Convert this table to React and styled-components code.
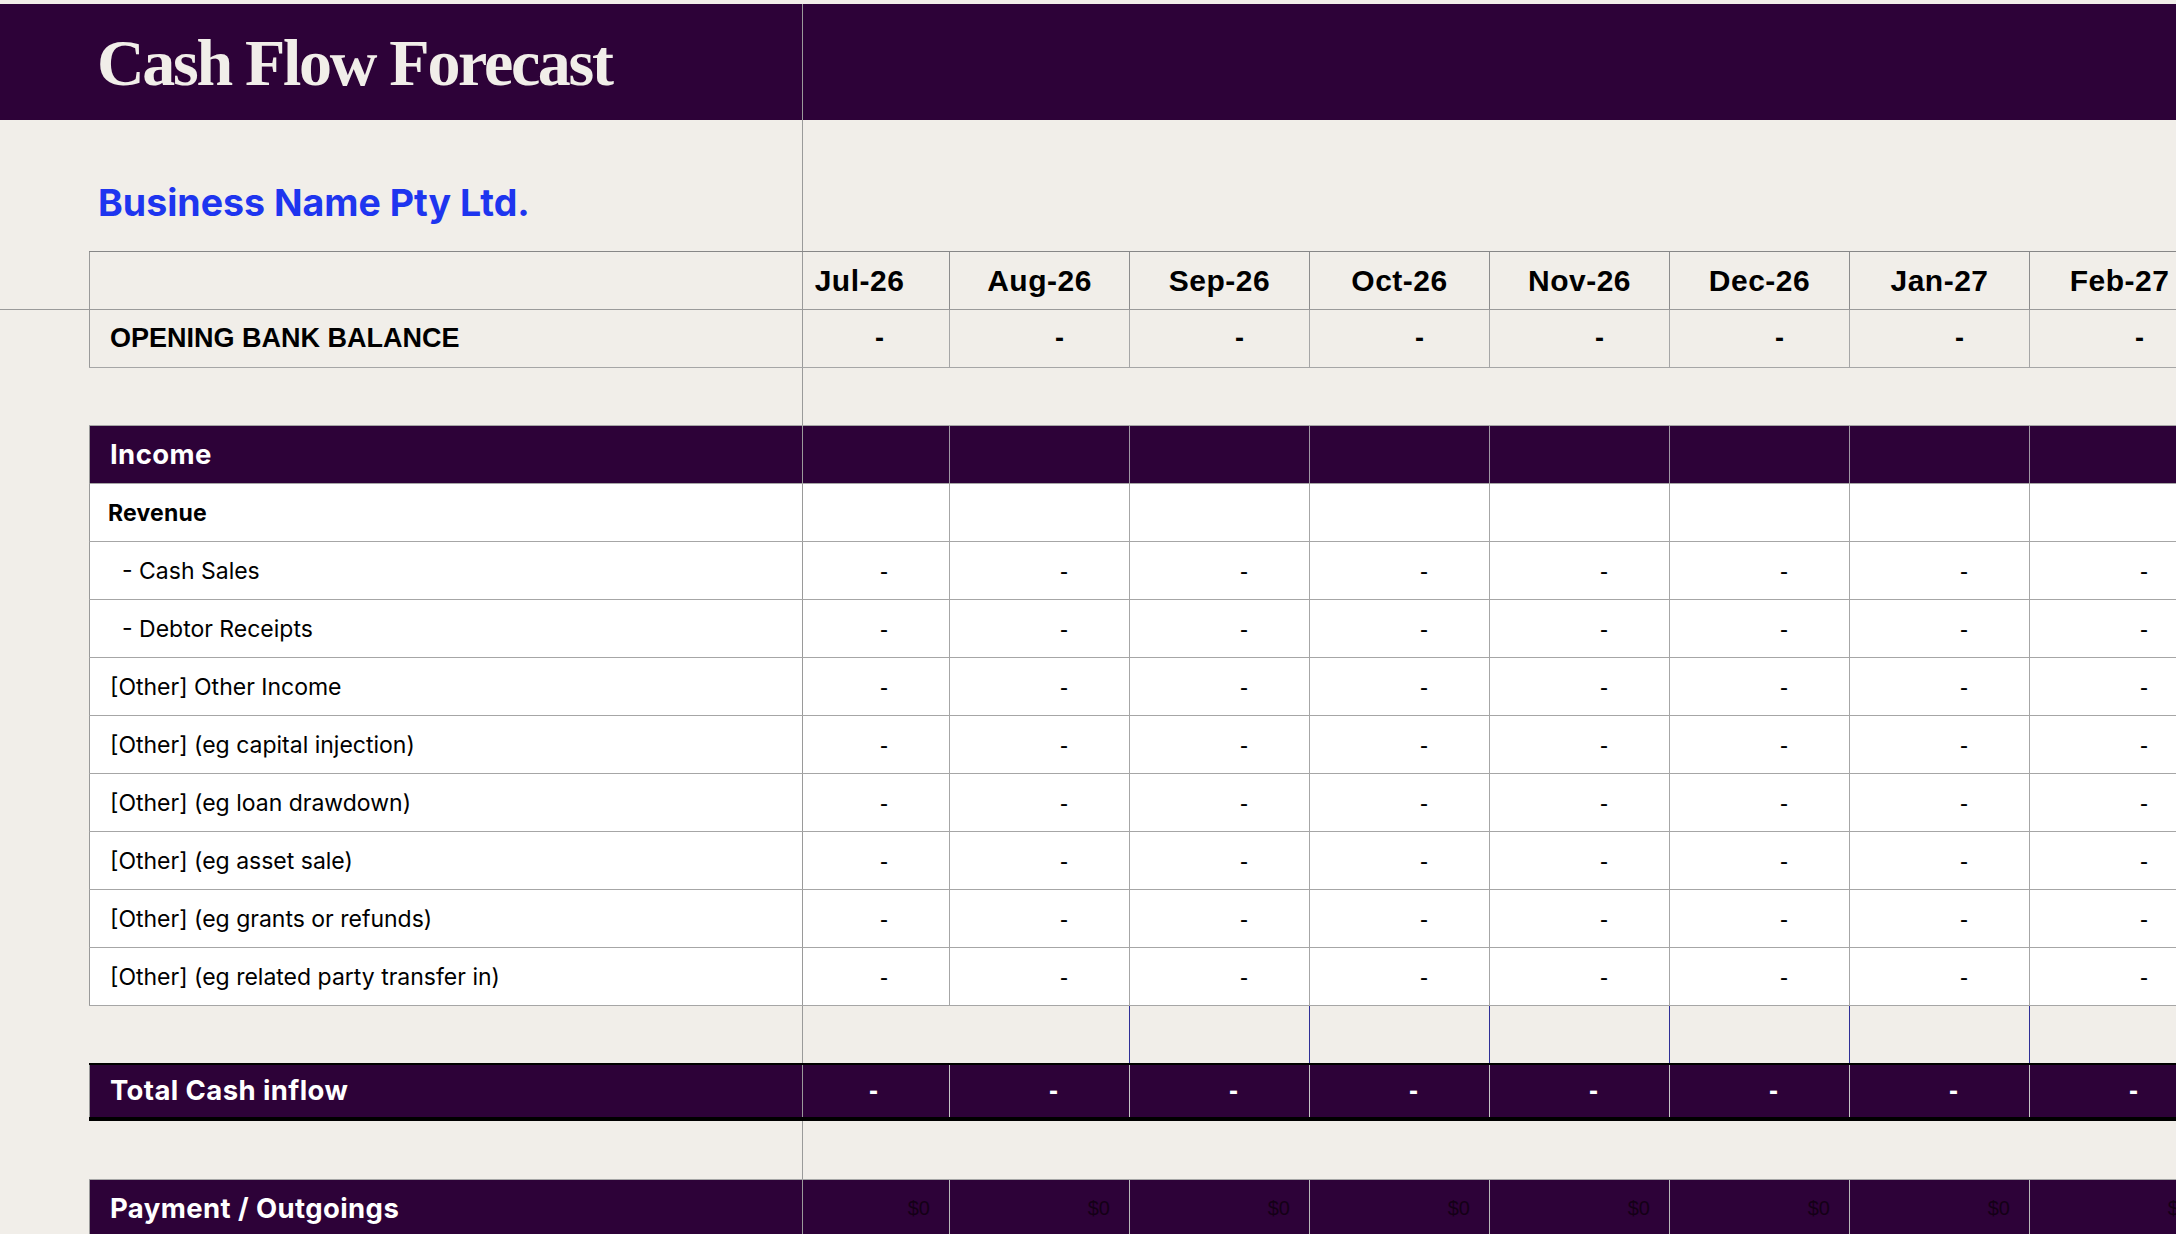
import React from 'react';
import styled, { createGlobalStyle, css } from 'styled-components';

const PURPLE = '#2d0238';
const PAPER = '#f1eee9';
const GRID = '#a6a6a6';
const FREEZE = '#9a9a9a';

const MONTHS = ['Jul-26', 'Aug-26', 'Sep-26', 'Oct-26', 'Nov-26', 'Dec-26', 'Jan-27', 'Feb-27'];

const INCOME_LINES = [
    { label: 'Revenue', kind: 'sub', empty: true },
    { label: '- Cash Sales', kind: 'item', indent: 32 },
    { label: '- Debtor Receipts', kind: 'item', indent: 32 },
    { label: '[Other] Other Income', kind: 'item' },
    { label: '[Other] (eg capital injection)', kind: 'item' },
    { label: '[Other] (eg loan drawdown)', kind: 'item' },
    { label: '[Other] (eg asset sale)', kind: 'item' },
    { label: '[Other] (eg grants or refunds)', kind: 'item' },
    { label: '[Other] (eg related party transfer in)', kind: 'item' },
];

const GlobalStyle = createGlobalStyle`
    * { box-sizing: border-box; }
    html, body {
        margin: 0;
        padding: 0;
        background: ${PAPER};
        overflow: hidden;
    }
    body {
        font-family: Inter, "Liberation Sans", sans-serif;
        color: #000;
    }
`;

const Page = styled.div`
    width: 2176px;
    height: 1234px;
    padding-top: 4px;
    overflow: hidden;
    background: ${PAPER};
`;

const Banner = styled.header`
    display: grid;
    grid-template-columns: 802px 1fr;
    height: 116px;
    background: ${PURPLE};
`;

const TitleCell = styled.div`
    padding: 26px 0 0 97px;
`;

const Title = styled.h1`
    margin: 0;
    font-family: "Liberation Serif", "DejaVu Serif", serif;
    font-weight: 700;
    font-size: 66px;
    line-height: 66px;
    letter-spacing: -2.3px;
    color: ${PAPER};
    white-space: nowrap;
`;

const PaneRest = styled.div`
    border-left: 1px solid ${FREEZE};
`;

const NameBand = styled.div`
    display: grid;
    grid-template-columns: 802px 1fr;
    height: 131px;
`;

const NameCell = styled.div`
    padding: 64px 0 0 98px;
`;

const BusinessName = styled.h2`
    margin: 0;
    font-family: Inter, sans-serif;
    font-weight: 700;
    font-size: 37.5px;
    line-height: 37px;
    color: #1e35ef;
    white-space: nowrap;
`;

const Row = styled.div`
    display: grid;
    grid-template-columns: 89px 1fr;
    height: 58px;
`;

const Gutter = styled.div`
    border-top: ${p => (p.$freeze ? `1px solid ${FREEZE}` : 'none')};
`;

const Band = styled.div`
    display: grid;
    grid-template-columns: 713px 1fr;
    min-width: 0;
    background: ${p => p.$bg || 'transparent'};
    border-top: ${p => p.$top || 'none'};
    border-bottom: ${p => p.$bottom || 'none'};
`;

const labelStyles = {
    blank: css``,
    caps: css`
        font-family: "Liberation Sans", Arial, sans-serif;
        font-weight: 700;
        font-size: 27px;
    `,
    heading: css`
        font-weight: 700;
        font-size: 27.5px;
        letter-spacing: 0.4px;
        color: #fff;
        padding-bottom: 2px;
    `,
    sub: css`
        font-weight: 700;
        font-size: 23px;
        letter-spacing: 0.2px;
        padding-left: 18px;
    `,
    item: css`
        font-weight: 400;
        font-size: 23px;
    `,
};

const Label = styled.div`
    display: flex;
    align-items: center;
    padding-left: ${p => p.$indent || 20}px;
    border-left: 1px solid ${p => (p.$boxed ? FREEZE : 'transparent')};
    white-space: pre;
    ${p => labelStyles[p.$variant]}
`;

const Strip = styled.div`
    min-width: 0;
    overflow: hidden;
    border-left: 1px solid ${FREEZE};
`;

const Track = styled.div`
    display: flex;
    height: 100%;
    margin-left: -34px;
`;

const valueStyles = {
    month: css`
        justify-content: center;
        font-family: "Liberation Sans", Arial, sans-serif;
        font-weight: 700;
        font-size: 30px;
        letter-spacing: 0.5px;
    `,
    opening: css`
        justify-content: flex-end;
        padding-right: 65px;
        font-family: "Liberation Sans", Arial, sans-serif;
        font-weight: 700;
        font-size: 27px;
    `,
    item: css`
        justify-content: flex-end;
        padding-right: 61px;
        font-family: "Liberation Sans", Arial, sans-serif;
        font-size: 24px;
    `,
    total: css`
        justify-content: flex-end;
        padding-right: 71px;
        font-family: "Liberation Sans", Arial, sans-serif;
        font-weight: 700;
        font-size: 27px;
        color: #fff;
    `,
    payment: css`
        justify-content: flex-end;
        padding-right: 19px;
        font-family: "Liberation Sans", Arial, sans-serif;
        font-size: 20px;
        color: #140016;
    `,
    blank: css``,
};

const Cell = styled.div`
    flex: 0 0 180px;
    display: flex;
    align-items: center;
    border-left: 1px solid ${p => p.$divider || 'transparent'};
    ${p => valueStyles[p.$variant]}
`;

function MonthCells({ variant, divider, text }) {
    return (
        <Strip>
            <Track>
                {MONTHS.map((m, i) => (
                    <Cell
                        key={m}
                        $variant={variant}
                        $divider={typeof divider === 'function' ? divider(i) : divider}
                    >
                        {variant === 'month' ? m : text}
                    </Cell>
                ))}
            </Track>
        </Strip>
    );
}

function SheetRow({ freeze, bg, top, bottom, label, variant = 'blank', boxed, indent, cells }) {
    return (
        <Row>
            <Gutter $freeze={freeze} />
            <Band $bg={bg} $top={top} $bottom={bottom}>
                <Label $variant={variant} $boxed={boxed} $indent={indent}>
                    {label}
                </Label>
                <MonthCells {...cells} />
            </Band>
        </Row>
    );
}

export default function App() {
    const gridTop = `1px solid ${GRID}`;

    return (
        <>
            <GlobalStyle />
            <Page>
                <Banner>
                    <TitleCell>
                        <Title>Cash Flow Forecast</Title>
                    </TitleCell>
                    <PaneRest />
                </Banner>

                <NameBand>
                    <NameCell>
                        <BusinessName>Business Name Pty Ltd.</BusinessName>
                    </NameCell>
                    <PaneRest />
                </NameBand>

                <SheetRow
                    top="1px solid #878787"
                    boxed
                    cells={{ variant: 'month', divider: '#8c8c8c' }}
                />
                <SheetRow
                    freeze
                    top={`1px solid ${FREEZE}`}
                    boxed
                    label="OPENING BANK BALANCE"
                    variant="caps"
                    cells={{ variant: 'opening', divider: GRID, text: '-' }}
                />
                <SheetRow top={gridTop} cells={{ variant: 'blank' }} />

                <SheetRow
                    bg={PURPLE}
                    top={gridTop}
                    boxed
                    label="Income"
                    variant="heading"
                    cells={{ variant: 'blank', divider: '#9f97a3' }}
                />
                {INCOME_LINES.map(line => (
                    <SheetRow
                        key={line.label}
                        bg="#fff"
                        top={gridTop}
                        boxed
                        label={line.label}
                        variant={line.kind}
                        indent={line.indent}
                        cells={{ variant: 'item', divider: GRID, text: line.empty ? '' : '-' }}
                    />
                ))}
                <SheetRow
                    top={gridTop}
                    cells={{ variant: 'blank', divider: i => (i >= 2 ? '#2f2f96' : 'transparent') }}
                />

                <SheetRow
                    bg={PURPLE}
                    top="2px solid #000"
                    bottom="4px solid #000"
                    boxed
                    label="Total Cash inflow"
                    variant="heading"
                    cells={{ variant: 'total', divider: '#c6c6c6', text: '-' }}
                />
                <SheetRow cells={{ variant: 'blank' }} />

                <SheetRow
                    bg={PURPLE}
                    top={gridTop}
                    boxed
                    label="Payment / Outgoings"
                    variant="heading"
                    cells={{ variant: 'payment', divider: '#b9b9b9', text: '$0' }}
                />
            </Page>
        </>
    );
}
